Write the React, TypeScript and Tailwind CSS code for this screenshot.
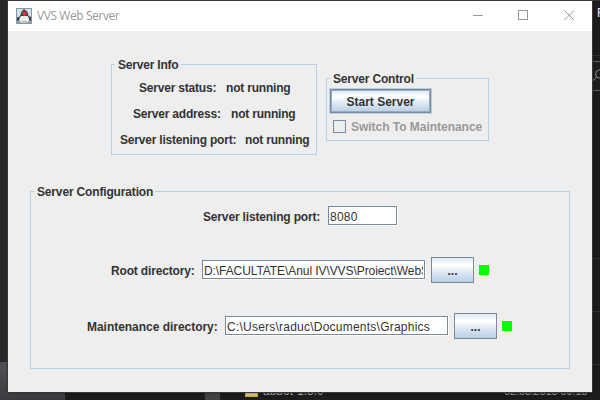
import type { ReactNode } from "react";

function Group({ title, gap, className, children }: { title: string; gap: string; className: string; children: ReactNode }) {
  return (
    <section className={`relative shrink-0 border border-[#b8cfe5] ${className}`}>
      <h2 className={`absolute -top-[7px] left-[3px] h-[15px] bg-[#eeeeee] pl-[3px] leading-[15px] whitespace-nowrap ${gap}`}>{title}</h2>
      {children}
    </section>
  );
}

function InfoRow({ label, className, labelWidth }: { label: string; className: string; labelWidth: string }) {
  return (
    <div className={`flex h-[26px] items-center whitespace-nowrap tracking-[-0.2px] ${className}`}>
      <span className={`shrink-0 ${labelWidth}`}>{label}</span>
      <span>not running</span>
    </div>
  );
}

function Field({ value, className, textClass }: { value: string; className: string; textClass: string }) {
  return (
    <div className={`h-[20px] shrink-0 overflow-hidden border-r border-b border-white ${className}`}>
      <div className="h-[19px] border border-[#7a8a99] bg-white pr-px pl-px">
        <div className={`h-[17px] overflow-hidden leading-[20px] font-normal whitespace-pre ${textClass}`}>{value}</div>
      </div>
    </div>
  );
}

function DirectoryRow({ label, value, className, labelClass, textClass }: { label: string; value: string; className: string; labelClass: string; textClass: string }) {
  return (
    <div className={`flex h-[26px] items-center ${className}`}>
      <span className={`shrink-0 whitespace-nowrap ${labelClass}`}>{label}</span>
      <Field value={value} className="w-[224px]" textClass={textClass} />
      <button className="ml-[5px] h-[26px] w-[43px] shrink-0 border border-[#7a8a99] bg-linear-[180deg,#dde8f3_0%,#ffffff_30%,#dde8f3_60%,#b8cfe5_100%] leading-[26px]">
        ...
      </button>
      <span className="ml-[5px] size-[10px] shrink-0 bg-[#00ff00]" />
    </div>
  );
}

function JavaIcon() {
  return (
    <svg width="16" height="16" viewBox="0 0 16 16" className="shrink-0">
      <rect width="16" height="16" fill="#8199ad" />
      <rect x="1" y="1" width="14" height="14" fill="#d3e0e8" />
      <rect x="1" y="10" width="14" height="5" fill="#8fa3b2" />
      <path d="M8 1 5.5 3.5 4.5 7 3 9 1 9.5V13l3-1.500V13h8v-1.500l3 1.500V9l-2.500-1-1-4z" fill="#3b4146" />
      <path d="M5 8h6.500L13 10v3l-2 1.500H5L3.500 12.500V10z" fill="#eeeeeb" />
      <path d="M6 13h5v1H6z" fill="#b5babd" />
      <path d="M6.500 5 9 3l2 2.200-2 2.800-2-.8z" fill="#e13431" />
      <path d="M5 4l2-2 1 1-2 3z" fill="#5c666d" />
    </svg>
  );
}

export default function App() {
  return (
    <main className="relative h-[400px] w-[600px] overflow-hidden bg-[#1c1c1c] font-['Liberation_Sans',Arial,sans-serif] text-[12px] font-bold text-[#333333]">
      <div className="absolute top-0 left-0 h-px w-full bg-[#343035]" />
      <div className="absolute top-0 left-0 h-[362px] w-[8px] bg-[#28282b]" />
      <div className="absolute top-[362px] left-0 h-[38px] w-[65px] bg-linear-to-b from-[#505055] to-[#3c3c40]" />
      <div className="absolute top-[392px] left-[205px] h-[8px] w-[15px] bg-[#424244]" />
      <div className="absolute top-[388px] left-[245px] h-[9px] w-[13px] border border-[#c5a33a] bg-[#dcc66c]" />
      <div className="absolute top-[384px] left-[263px] leading-[14px] font-normal whitespace-nowrap text-[#b0b0b0]">abbot-1.3.0</div>
      <div className="absolute top-[384px] left-[504px] text-[11.5px] leading-[14px] font-normal tracking-[-0.4px] whitespace-nowrap text-[#a0a0a0]">02.03.2015 09:18</div>
      <div className="absolute top-[6px] left-[597px] leading-[15px] font-normal text-[#eeeeee]">F</div>
      <div className="absolute top-[55px] left-[592px] h-px w-[8px] bg-[#303030]" />
      <div className="absolute top-[61px] left-[592px] h-[30px] w-[10px] border-y border-[#5b5b5b]" />
      <svg className="absolute top-[69px] left-[592px]" width="8" height="14" viewBox="0 0 8 14" fill="none" stroke="#879096">
        <circle cx="7.5" cy="5" r="4" />
        <path d="M4.5 8 0 12.5" />
      </svg>
      <div className="absolute top-[258px] left-[592px] h-px w-[8px] bg-[#303030]" />
      <div className="absolute top-[311px] left-[592px] h-px w-[8px] bg-[#303030]" />
      <div className="absolute top-[364px] left-[592px] h-px w-[8px] bg-[#303030]" />

      <div className="absolute top-px left-[8px] flex h-[391px] w-[584px] flex-col bg-[#eeeeee] shadow-[0_0_0_1px_#39393b,0_1px_3px_#0006]">
        <header className="flex h-[30px] shrink-0 items-center bg-white pl-[8px] text-[#999999]">
          <JavaIcon />
          <span className="ml-[5px] font-['Open_Sans',sans-serif] text-[12px] leading-[16px] font-normal tracking-[-0.42px] whitespace-nowrap">VVS Web Server</span>
          <svg className="ml-auto shrink-0" width="119" height="30" viewBox="0 0 119 30" fill="none" stroke="#999999">
            <path d="M0 14.5h10" />
            <rect x="45.5" y="9.5" width="9" height="9" />
            <path d="m91.5 9.5 9.500 9.500m0-9.500-9.500 9.500" />
          </svg>
        </header>

        <div className="flex h-[160px] shrink-0 pt-[33px] pl-[103px]">
          <Group title="Server Info" gap="w-[66px] tracking-[-0.2px]" className="h-[91px] w-[206px] pt-[10px]">
            <InfoRow label="Server status:" className="pl-[27px]" labelWidth="w-[87px]" />
            <InfoRow label="Server address:" className="pl-[21px]" labelWidth="w-[98px]" />
            <InfoRow label="Server listening port:" className="pl-[8px]" labelWidth="w-[125px]" />
          </Group>
          <Group title="Server Control" gap="w-[86px] tracking-[-0.18px]" className="mt-[14px] ml-[9px] h-[63px] w-[163px] pt-[9px] pl-[2px]">
            <button className="flex h-[26px] w-[103px] border border-[#b8cfe5] bg-[#b8cfe5]">
              <span className="h-full w-full border border-[#7a8a99] bg-linear-[180deg,#dde8f3_0%,#ffffff_30%,#dde8f3_60%,#b8cfe5_100%] leading-[24px] inset-shadow-[0_0_0_1px_#9aabbd]">Start Server</span>
            </button>
            <div className="mt-[6px] ml-[4px] flex h-[13px] items-center text-[#999999]">
              <span className="size-[13px] shrink-0 border border-[#7a8a99]" />
              <span className="ml-[5px] tracking-[-0.03px] whitespace-nowrap">Switch To Maintenance</span>
            </div>
          </Group>
        </div>

        <Group title="Server Configuration" gap="w-[121px] tracking-[-0.16px]" className="ml-[22px] flex h-[178px] w-[540px] flex-col pt-[14px]">
          <div className="flex h-[20px] items-center pl-[172px]">
            <span className="w-[125px] shrink-0 pt-px tracking-[-0.16px] whitespace-nowrap">Server listening port:</span>
            <Field value="8080" className="w-[70px]" textClass="tracking-[0.25px]" />
          </div>
          <DirectoryRow label="Root directory:" value="D:\FACULTATE\Anul IV\VVS\Proiect\WebServer" className="mt-[31px] pl-[80px]" labelClass="w-[91px] pt-px tracking-[-0.16px]" textClass="tracking-[-0.08px]" />
          <DirectoryRow label="Maintenance directory:" value="C:\Users\raduc\Documents\Graphics" className="mt-[30px] pl-[56px]" labelClass="w-[138px] pt-px tracking-[-0.03px]" textClass="tracking-[0.23px]" />
        </Group>
      </div>
    </main>
  );
}
